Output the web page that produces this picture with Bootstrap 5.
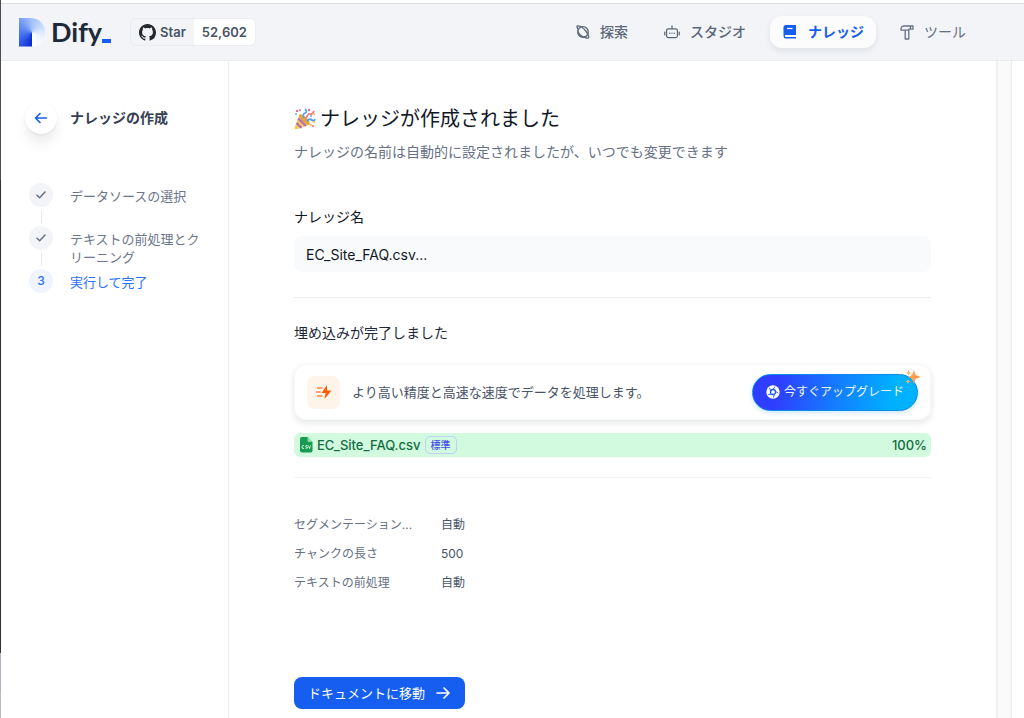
<!DOCTYPE html>
<html lang="ja">
<head>
<meta charset="utf-8">
<meta name="viewport" content="width=device-width, initial-scale=1">
<title>ナレッジの作成 - Dify</title>
<link href="https://cdn.jsdelivr.net/npm/bootstrap@5.3.0/dist/css/bootstrap.min.css" rel="stylesheet">
<style>
body{font-family:Inter,"Noto Sans CJK JP",sans-serif;font-size:14px;line-height:20px;color:#1d2939;background:#fff}
.shell{min-height:100vh}
.edge{width:1px;background:linear-gradient(#4a4e48 0 180px,#2d3632 180px 653px,#aeb3bd 653px 693px,#bdbdbf 693px)}
.topbar{height:58px;margin-top:3px;background:#f2f4f7;border-top:1px solid #dfe0e2;border-bottom:1px solid #eaecf0;padding:0 46px 0 18px}
.brand{font-family:Lato,sans-serif;font-weight:700;font-size:27px;line-height:32px;color:#1d2a3b;text-decoration:none}
.brand-shape{width:26px;height:29px;margin-right:6px;border-radius:0 14px 14px 0;background:conic-gradient(from 180deg at 50% 50%,#0b26cf 0deg,#2f5bea 50deg,#6f98f3 130deg,#a5c3f9 180deg,#cfe0fd 250deg,#f0f5ff 300deg,#fff 360deg);clip-path:polygon(0 0,100% 0,100% 75%,70% 100%,0 100%)}
.brand i{width:9px;height:4px;background:#155eef;margin-bottom:5px;align-self:flex-end}
.stars{border:1px solid #eaecf0;border-radius:6px;height:28px;margin-left:19px;font-size:13px;font-weight:600;color:#475467;text-decoration:none;overflow:hidden}
.stars span{padding:0 8px;height:26px}
.topnav{gap:12px}
.topnav a{color:#667085;text-decoration:none;height:32px;padding:0 12px;gap:10px;border-radius:12px}
.topnav a.mid{color:#5b6779;font-weight:500}
.topnav a.active{background:#fcfcfd;color:#155eef;font-weight:700;box-shadow:0 3px 6px #10182814}
.side{width:228px;border-right:1px solid #eaecf0;padding:41px 24px 0}
.side-head{gap:13px}
.back{width:32px;height:32px;border:0;background:#fff;box-shadow:0 10px 14px -2px #10182818,0 1px 3px #10182810}
.side h1{font-size:14px;line-height:20px;font-weight:600;color:#354052;margin:0}
.steps{margin:49px 0 0;padding:0 0 0 4px;list-style:none;font-size:13px;line-height:18px;color:#6b768b}
.steps li{gap:17px;height:43px}
.dot{width:24px;height:24px;border-radius:50%;background:#f2f4f7}
.rail{width:1px;height:13px;margin-top:3px;background:#e7e9ee}
.steps p{margin:4px 0 0}
.steps .now{color:#2970ff}
.steps .now .dot{background:#eff4ff;font-size:12px;font-weight:500}
.content{padding:43px 65px 7px}
.content h2{font-size:20px;line-height:30px;font-weight:400;color:#101828;margin:0;gap:4px}
.sub{color:#667085;margin:8px 0 0}
.field-name{margin:45px 0 9px;color:#101828}
.name-box{border:0;background:#f9fafb;border-radius:8px;height:36px;padding:8px 12px;color:#101828;font-size:14px}
.rule{height:1px;background:#eaecf0}
.rule.first{margin:25px 0}
.rule.soft{background:#f2f4f7;margin-top:20px}
.status{margin-bottom:21px}
.upsell{border-radius:12px;height:56px;padding:0 12px;border:1px solid #f5f6f8;box-shadow:0 3px 6px #1018281c;font-size:13px;color:#475467}
.flash{width:33px;height:33px;border-radius:8px;background:#fff4ea;margin-right:12px}
.upgrade{height:37px;border:1px solid #0b8bec;border-radius:19px;padding:0 13px;gap:4px;color:#eff6ff;font-size:12px;background:linear-gradient(100deg,#2f3dff 15%,#147bff 50%,#00b1ff 84%);box-shadow:0 2px 5px #0b8bec33}
.spark{position:absolute;right:-4px;top:-5px}
.file{height:24px;margin-top:13px;border-radius:6px;background:#d1fadf;color:#146c43;font-size:13px;font-weight:500;padding:0 4px 0 5px}
.tag{border:1px solid #c1cffa;border-radius:5px;font-size:10px;line-height:16px;color:#444ce7;padding:0 5px;margin-left:4px}
.meta{font-size:12px;line-height:18px;margin:38px 0 0}
.meta div{margin-bottom:10px;height:19px}
.meta dt{font-weight:400;color:#667085;width:119px;margin-right:28px}
.meta dd{margin:0;color:#475467}
.go{height:32px;border:0;border-radius:8px;background:#155eef;color:#fff;font-size:13px;padding:0 14px;gap:10px;margin-top:84px}
.gutter{width:16px;margin-right:12px;background:#fafafa;border-left:2px solid #f0f0f1;border-right:1px solid #eaeaeb}
</style>
</head>
<body>
<div class="shell d-flex">
<div class="edge flex-shrink-0"></div>
<div class="d-flex flex-column flex-grow-1">
<header class="topbar d-flex align-items-center">
  <a class="brand d-flex align-items-center" href="#">
    <span class="brand-shape"></span>
    Dify<i></i></a>
  <a class="stars d-flex align-items-center" href="#">
    <span class="d-flex align-items-center gap-1"><svg width="17" height="17" viewBox="0 0 16 16" fill="#24292f" aria-hidden="true"><path d="M8 0C3.580 0 0 3.580 0 8c0 3.540 2.290 6.530 5.470 7.590.4.070.55-.17.55-.38 0-.19-.01-.82-.01-1.490-2.010.37-2.530-.49-2.690-.94-.09-.23-.48-.94-.82-1.130-.28-.15-.68-.52-.01-.53.63-.01 1.080.58 1.230.82.72 1.210 1.870.87 2.330.66.070-.52.28-.87.51-1.070-1.780-.2-3.640-.89-3.640-3.950 0-.87.31-1.590.82-2.150-.08-.2-.36-1.020.08-2.120 0 0 .67-.21 2.200.82.64-.18 1.320-.27 2-.27s1.360.09 2 .27c1.530-1.040 2.200-.82 2.200-.82.44 1.100.16 1.920.08 2.120.51.56.82 1.270.82 2.150 0 3.070-1.870 3.750-3.650 3.950.29.25.54.73.54 1.480 0 1.070-.01 1.930-.01 2.200 0 .21.15.46.55.38A8.010 8.010 0 0 0 16 8c0-4.420-3.580-8-8-8Z"/></svg>Star</span>
    <span class="bg-white d-flex align-items-center">52,602</span></a>
  <nav class="topnav d-flex align-items-center ms-auto">
    <a class="mid d-flex align-items-center" href="#"><svg width="14" height="14" viewBox="0 0 14 14" fill="none" stroke="#5b6779" stroke-width="1.300" aria-hidden="true"><circle cx="7" cy="7" r="5.300"/><path d="M2.500 4.500C.5 2 .5.700 2 .800 4 .900 7.500 3 9.800 6s3.700 6.400 2.400 7-3.200-.6-4.700-1.600"/><path d="M1.800 5.500C2 8 5 11.500 7.500 12.200"/></svg>探索</a>
    <a class="mid d-flex align-items-center" href="#"><svg width="16" height="16" viewBox="0 0 17 16" fill="none" stroke="#5b6779" stroke-width="1.300" stroke-linecap="round" aria-hidden="true"><rect x="2.700" y="4.700" width="11.600" height="9.300" rx="2"/><path d="M8.500 4.500V1.500M.8 8v3M16.200 8v3"/><path d="M6 9.200v.2M8.500 9.200v.2M11 9.200v.2" stroke-width="1.500"/></svg>スタジオ</a>
    <a class="active d-flex align-items-center" href="#"><svg width="16" height="16" viewBox="0 0 16 16" aria-hidden="true"><path d="M4 1h10v10H3.800q-1 0-1 1t1 1H14v1.500H3.700Q1.500 14.500 1.500 12V3.500Q1.500 1 4 1Z" fill="#155eef"/><path d="M5 4.500h5.500" stroke="#fff" stroke-width="1.200"/></svg>ナレッジ</a>
    <a class="d-flex align-items-center" href="#"><svg width="14" height="15" viewBox="0 0 14 15" fill="none" stroke="#667085" stroke-width="1.300" stroke-linejoin="round" aria-hidden="true"><path d="M3.500 1H13v3.200H8.800V14H5.200V5.200H1V3.500Q1.500 1.300 3.500 1ZM5.200 5.200h3.600M10.500 1v3"/></svg>ツール</a>
  </nav>
</header>
<div class="d-flex flex-grow-1">
  <aside class="side flex-shrink-0">
    <div class="side-head d-flex align-items-center"><button class="back rounded-circle p-0 d-flex align-items-center justify-content-center" type="button" aria-label="戻る"><svg width="14" height="12" viewBox="0 0 14 12" fill="none" stroke="#155eef" stroke-width="1.600" stroke-linecap="round" stroke-linejoin="round"><path d="M12.500 6H1.500M6 1.500 1.500 6 6 10.500"/></svg></button><h1>ナレッジの作成</h1></div>
    <ol class="steps">
      <li class="d-flex"><div class="d-flex flex-column align-items-center"><span class="dot d-flex align-items-center justify-content-center"><svg width="10" height="8" viewBox="0 0 10 8" fill="none" stroke="#667085" stroke-width="1.500" stroke-linecap="round"><path d="M1 4.200 3.700 6.800 9 1"/></svg></span><span class="rail"></span></div><p>データソースの選択</p></li>
      <li class="d-flex"><div class="d-flex flex-column align-items-center"><span class="dot d-flex align-items-center justify-content-center"><svg width="10" height="8" viewBox="0 0 10 8" fill="none" stroke="#667085" stroke-width="1.500" stroke-linecap="round"><path d="M1 4.200 3.700 6.800 9 1"/></svg></span><span class="rail"></span></div><p>テキストの前処理とクリーニング</p></li>
      <li class="now d-flex"><span class="dot d-flex align-items-center justify-content-center">3</span><p>実行して完了</p></li>
    </ol>
  </aside>
  <main class="content flex-grow-1">
    <h2 class="d-flex align-items-center"><svg width="22" height="22" viewBox="0 0 22 22" fill="none" aria-hidden="true"><path d="M5.500 6 16 16.500 2.500 21.300Q.5 21.500 .7 19.500Z" fill="#ffc83d"/><path d="m4.300 10.500 7.500 7.500M2.500 15l5 5" stroke="#a36ad8" stroke-width="2"/><ellipse cx="10.500" cy="11.500" rx="7" ry="2.600" transform="rotate(45 10.500 11.500)" fill="#e3a33b"/><path d="M10 10q-2-4 1-5t0-4" stroke="#5aa7f5" stroke-width="1.800"/><path d="M12 11q2-6 4-5t4-3" stroke="#f17c8d" stroke-width="1.800"/><path d="M13 13q3-3 5-1t3-1" stroke="#4f9df5" stroke-width="1.800"/><g fill="#ef6b82"><circle cx="3" cy="3" r="1.200"/><circle cx="6" cy="2" r="1"/><circle cx="15" cy="2" r="1.200"/><circle cx="19" cy="18" r="1.100"/></g><g fill="#65aef7"><circle cx="2" cy="6" r="1"/><circle cx="17" cy="8" r="1"/></g><g fill="#f9b934"><circle cx="20" cy="6" r="1"/><circle cx="17" cy="17" r="1"/><circle cx="20" cy="14" r="1"/></g></svg>ナレッジが作成されました</h2>
    <p class="sub">ナレッジの名前は自動的に設定されましたが、いつでも変更できます</p>
    <label class="field-name d-block" for="kb">ナレッジ名</label>
    <input class="name-box w-100 d-block" id="kb" type="text" value="EC_Site_FAQ.csv..." readonly>
    <div class="rule first"></div>
    <div class="status">埋め込みが完了しました</div>
    <div class="upsell d-flex align-items-center">
      <span class="flash d-flex align-items-center justify-content-center"><svg width="16" height="14" viewBox="0 0 16 14" aria-hidden="true"><path d="M11 0 5.500 8H9.500L8.500 14 15.500 5.500H11Z" fill="#ff5c0a"/><path d="M1.500 3H6M.5 7H4M1.500 11H6" stroke="#ff8345" stroke-width="1.400" stroke-linecap="round"/></svg></span>
      <span>より高い精度と高速な速度でデータを処理します。</span>
      <button class="upgrade position-relative d-flex align-items-center ms-auto" type="button"><svg width="14" height="14" viewBox="0 0 14 14" aria-hidden="true"><circle cx="7" cy="7" r="6.700" fill="#fff"/><g fill="none" stroke="#2457ff" stroke-width="1.300"><circle cx="7" cy="7" r="2.500"/><path d="M7 4.500 9 1.500M9.400 6.200l2.800 2M8.500 9l-1 3.500M5.500 9l-3.200.5M4.600 6.200 3.500 2.800" stroke-width="1"/></g></svg>今すぐアップグレード
        <svg class="spark" width="16" height="15" viewBox="0 0 16 15" fill="#ffb15c" aria-hidden="true"><path d="M9 0 10.600 5 16 7 10.600 8.800 9 14 7.200 8.800 3 7 7.200 5Z" fill="#ff9e4f"/><path d="M3.500 0 4.300 2 6 3 4.300 3.700 3.500 5.500 2.700 3.700 1 3 2.700 2ZM3 9l.7 1.700L5.500 11.500l-1.800.8L3 14.500l-.7-2.200L.5 11.500l1.800-.8Z"/></svg></button>
    </div>
    <div class="file d-flex align-items-center">
      <svg class="me-1" width="14" height="16" viewBox="0 0 14 16" aria-hidden="true"><path d="M3 0H8.500L13.500 5V13.500Q13.500 15.500 11.500 15.500H3Q1 15.500 1 13.500V2Q1 0 3 0Z" fill="#169b50"/><path d="M8.500 0 13.500 5H10Q8.500 5 8.500 3.500Z" fill="#8ed9ad"/><path d="M5 8.500Q3 8 3 10t2 1.500M8.500 8.500q-2-.3-2 .7t2 1.200-2 1M9.500 8.500l1 3 1-3" fill="none" stroke="#fff" stroke-width=".8"/></svg>
      <span>EC_Site_FAQ.csv</span><span class="tag">標準</span><span class="ms-auto">100%</span>
    </div>
    <div class="rule soft"></div>
    <dl class="meta">
      <div class="d-flex"><dt class="text-truncate">セグメンテーション...</dt><dd>自動</dd></div>
      <div class="d-flex"><dt>チャンクの長さ</dt><dd>500</dd></div>
      <div class="d-flex"><dt>テキストの前処理</dt><dd>自動</dd></div>
    </dl>
    <button class="go d-flex align-items-center" type="button">ドキュメントに移動<svg width="16" height="14" viewBox="0 0 16 14" fill="none" stroke="#fff" stroke-width="1.700" stroke-linecap="round" stroke-linejoin="round" aria-hidden="true"><path d="M2 7h12M9 2l5 5-5 5"/></svg></button>
  </main>
  <div class="gutter flex-shrink-0"></div>
</div>
</div>
</div>
<script src="https://cdn.jsdelivr.net/npm/bootstrap@5.3.0/dist/js/bootstrap.bundle.min.js"></script>
</body>
</html>
